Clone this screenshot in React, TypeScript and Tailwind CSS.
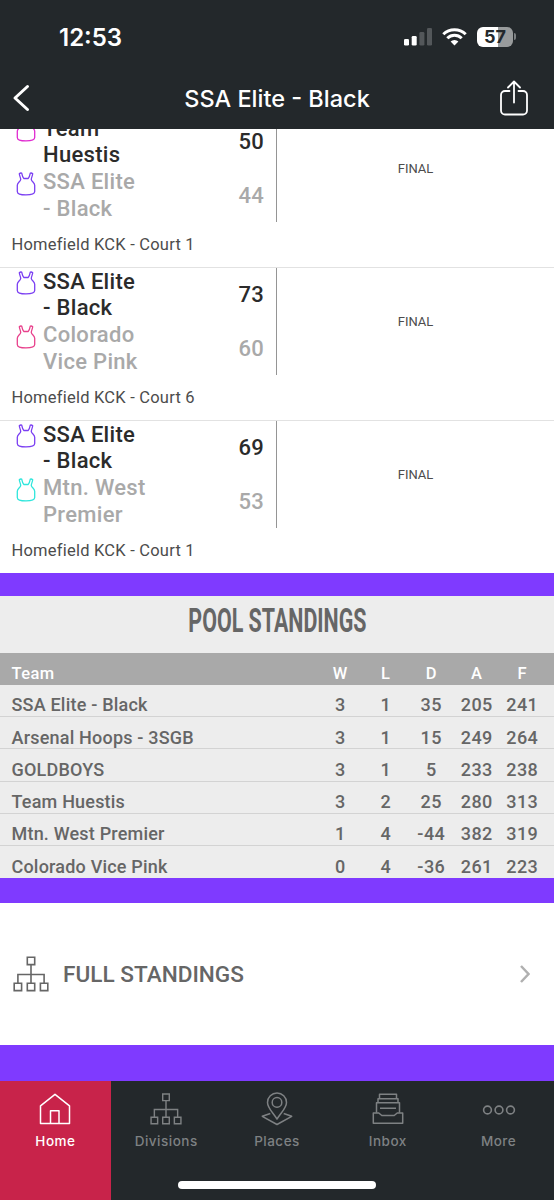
import type { ReactNode } from 'react';

type Side = { name: [string, string]; score: number; color: string };
type Game = { top: Side; bottom: Side; court: string };

const games: Game[] = [
  {
    top: { name: ['Team', 'Huestis'], score: 50, color: '#e02bd0' },
    bottom: { name: ['SSA Elite', '- Black'], score: 44, color: '#7b3ff2' },
    court: 'Homefield KCK - Court 1',
  },
  {
    top: { name: ['SSA Elite', '- Black'], score: 73, color: '#7b3ff2' },
    bottom: { name: ['Colorado', 'Vice Pink'], score: 60, color: '#e8418c' },
    court: 'Homefield KCK - Court 6',
  },
  {
    top: { name: ['SSA Elite', '- Black'], score: 69, color: '#7b3ff2' },
    bottom: { name: ['Mtn. West', 'Premier'], score: 53, color: '#2fe6dc' },
    court: 'Homefield KCK - Court 1',
  },
];

const standings = [
  { team: 'SSA Elite - Black', stats: [3, 1, 35, 205, 241] },
  { team: 'Arsenal Hoops - 3SGB', stats: [3, 1, 15, 249, 264] },
  { team: 'GOLDBOYS', stats: [3, 1, 5, 233, 238] },
  { team: 'Team Huestis', stats: [3, 2, 25, 280, 313] },
  { team: 'Mtn. West Premier', stats: [1, 4, -44, 382, 319] },
  { team: 'Colorado Vice Pink', stats: [0, 4, -36, 261, 223] },
];

const Jersey = ({ color }: { color: string }) => (
  <svg width="20" height="24" viewBox="0 0 20 24" fill="none" stroke={color} strokeWidth="1.3" strokeLinejoin="round">
    <path d="M3.300 1.700Q4.500.600 5.700 1.200C6.200 3.600 6.800 5.700 7.800 6.500H12.200C13.200 5.700 13.800 3.600 14.300 1.200Q15.500.600 16.700 1.700C16.500 4 15.300 5.500 15.300 7.600C15.800 9.800 18.700 10.700 18.700 13.200V19.500C18.700 21.800 16 22.900 10 22.900S1.300 21.800 1.300 19.500V13.200C1.300 10.700 4.200 9.800 4.700 7.600C4.700 5.500 3.500 4 3.300 1.700Z" />
  </svg>
);

const Tree = ({ size }: { size: number }) => (
  <svg width={size} height={size} viewBox="0 0 36 36" fill="none" stroke="currentColor" strokeWidth="1.6">
    <path d="M14.300 1.200h7.400v7.400h-7.400zM1.200 27.200h7.400v7.400H1.200zM14.300 27.200h7.400v7.400h-7.400zM27.400 27.200h7.400v7.400h-7.400zM18 8.600v18.600M4.900 27.200v-8.700h26.200v8.700" />
  </svg>
);

const HomeIcon = () => (
  <svg width="32" height="32" viewBox="0 0 32 32" fill="none" stroke="currentColor" strokeWidth="1.5" strokeLinejoin="round">
    <path d="M1.500 30.500V12.800L16 1.300l14.500 11.500v17.700zM11.500 30.500V17.700h8.500v12.800" />
  </svg>
);

const PlacesIcon = () => (
  <svg width="32" height="34" viewBox="0 0 32 34" fill="none" stroke="currentColor" strokeWidth="1.5" strokeLinejoin="round">
    <path d="M16 27C12 20.500 6.500 16 6.500 10.400a9.500 9.500 0 0 1 19 0C25.500 16 20 20.500 16 27Z" />
    <circle cx="16" cy="10.400" r="4.800" />
    <path d="M9.300 21.500 1.300 24.300 16 32.500l14.700-8.200-8-2.800" />
  </svg>
);

const InboxIcon = () => (
  <svg width="32" height="32" viewBox="0 0 32 32" fill="none" stroke="currentColor" strokeWidth="1.5" strokeLinejoin="round">
    <path d="M4.500 19.800V9.800h23v10M6 9.800V5.700h20v4.100M7.500 5.700V1.300h17v4.400M8 15.200h16" />
    <path d="M1.300 30.200V20h5.500l3 2.500h12.400l3-2.500h5.500v10.200z" />
  </svg>
);

const MoreIcon = () => (
  <svg width="34" height="32" viewBox="0 0 34 32" fill="none" stroke="currentColor" strokeWidth="1.6">
    <circle cx="5.500" cy="17" r="3.900" />
    <circle cx="17" cy="17" r="3.900" />
    <circle cx="28.500" cy="17" r="3.900" />
  </svg>
);

const StatusBar = () => (
  <div className="flex h-[68px] items-start justify-between pl-[59px] pr-[38px]">
    <span className="mt-[23px] font-['Inter'] text-[24px] font-semibold leading-[30px]">12:53</span>
    <div className="mt-[26px] flex h-[21px] items-center">
      <svg width="28" height="18" viewBox="0 0 28 18" fill="#fff">
        <rect x="0" y="11" width="5" height="6.500" rx="1.300" />
        <rect x="7.700" y="8" width="5" height="9.500" rx="1.300" />
        <rect x="15.400" y="4" width="5" height="13.500" rx="1.300" fill="#53575a" />
        <rect x="23" y="0" width="5" height="17.500" rx="1.300" fill="#53575a" />
      </svg>
      <svg className="ml-[10px]" width="25" height="18" viewBox="0 0 25 18" fill="none" stroke="#fff" strokeWidth="3">
        <path d="M1.300 6.200a16 16 0 0 1 22.400 0" />
        <path d="M5.300 10.300a10.300 10.300 0 0 1 14.400 0" />
        <path d="M8.600 13.600a5.600 5.600 0 0 1 7.800 0L12.500 17.500z" fill="#fff" stroke="none" />
      </svg>
      <div className="ml-[10px] flex h-5 w-9 items-center justify-center rounded-[6px] bg-linear-to-r from-white from-58% to-[#989b9c] to-58% font-['Inter'] text-[18px] font-bold leading-none text-[#23282b]">
        57
      </div>
      <span className="ml-px h-[7px] w-[2px] rounded-r-full bg-[#7c8082]" />
    </div>
  </div>
);

const Header = () => (
  <header className="h-[129px] shrink-0 bg-[#23282b] text-white">
    <StatusBar />
    <div className="flex h-[60px] items-center justify-between pl-[12px] pr-[26px]">
      <svg width="18" height="28" viewBox="0 0 18 28" fill="none" stroke="#fff" strokeWidth="3" strokeLinecap="round" strokeLinejoin="round">
        <path d="M15.500 2.500 3 14l12.500 11.500" />
      </svg>
      <h1 className="pl-[24px] pt-[2px] font-['Inter'] text-[23.500px] font-medium leading-[30px]">SSA Elite - Black</h1>
      <svg width="28" height="36" viewBox="0 0 28 36" fill="none" stroke="#fff" strokeWidth="1.800" strokeLinecap="round" strokeLinejoin="round">
        <path d="M9.500 11H5a4 4 0 0 0-4 4v15.500a4 4 0 0 0 4 4h18a4 4 0 0 0 4-4V15a4 4 0 0 0-4-4h-4.500M14 22.500V1.800M8 7.500l6-6 6 6" />
      </svg>
    </div>
  </header>
);

const TeamRow = ({ side, className }: { side: Side; className: string }) => (
  <div className={`flex h-[53.500px] items-center ${className}`}>
    <div className="w-[27px] self-start pt-[3px]">
      <Jersey color={side.color} />
    </div>
    <div className="flex-1 pt-px text-[22px] leading-[26.500px] tracking-[0.3px]">
      {side.name[0]}
      <br />
      {side.name[1]}
    </div>
    <span className="text-[22px] tracking-[0.3px]">{side.score}</span>
  </div>
);

const GameRow = ({ game }: { game: Game }) => (
  <div className="h-[153px] shrink-0 border-t border-[#e2e2e2]">
    <div className="flex h-[107px]">
      <div className="w-[277px] border-r border-[#959595] pl-4 pr-3 font-medium">
        <TeamRow side={game.top} className="text-[#2b2b2b]" />
        <TeamRow side={game.bottom} className="text-[#a9a9a9]" />
      </div>
      <div className="flex flex-1 items-center justify-center text-[13px] text-[#4c4c4c]">FINAL</div>
    </div>
    <p className="pl-[11.500px] pt-[11px] text-[16.500px] leading-6 tracking-[0.22px] text-[#4c4c4c]">{game.court}</p>
  </div>
);

const Stats = ({ values }: { values: (string | number)[] }) => (
  <div className="flex pr-[9px] text-center tracking-[0.4px]">
    {values.map((value, i) => (
      <span key={i} className="w-[45.500px]">
        {value}
      </span>
    ))}
  </div>
);

const Standings = () => (
  <section className="shrink-0 border-b-[25px] border-t-[23px] border-[#7f3aff] bg-[#ededed] font-medium text-[#666]">
    <h2 className="flex h-[57px] justify-center pt-[3px] text-[34px] font-bold leading-[42px]">
      <span className="scale-x-[0.630] whitespace-nowrap">POOL STANDINGS</span>
    </h2>
    <div className="flex h-[32px] items-end justify-between bg-[#a9a9a9] pb-[1px] pl-[11.500px] text-[16.500px] leading-5 tracking-[0.4px] text-white">
      <span>Team</span>
      <Stats values={['W', 'L', 'D', 'A', 'F']} />
    </div>
    {standings.map((row) => (
      <div
        key={row.team}
        className="flex h-[32.200px] items-end justify-between border-b border-[#d3d3d3] pl-[11.500px] text-[18px] leading-[20.800px] tracking-[0.2px] last:border-0"
      >
        <span>{row.team}</span>
        <Stats values={row.stats} />
      </div>
    ))}
  </section>
);

const Tab = ({ label, active, children }: { label: string; active?: boolean; children: ReactNode }) => (
  <div className={`flex flex-1 flex-col items-center pt-[11px] ${active ? 'bg-[#c8234a] text-white' : 'text-[#7e8183]'}`}>
    <div className="flex h-[34px] items-center">{children}</div>
    <span className="mt-[5px] font-['Inter'] text-[13.500px] font-medium leading-5 tracking-[0.5px]">{label}</span>
  </div>
);

const TabBar = () => (
  <nav className="relative flex h-[119px] shrink-0 bg-[#23282b]">
    <Tab label="Home" active><HomeIcon /></Tab>
    <Tab label="Divisions"><Tree size={32} /></Tab>
    <Tab label="Places"><PlacesIcon /></Tab>
    <Tab label="Inbox"><InboxIcon /></Tab>
    <Tab label="More"><MoreIcon /></Tab>
    <div className="absolute bottom-[11px] left-1/2 h-[8px] w-[198px] -translate-x-1/2 rounded-full bg-white" />
  </nav>
);

export default function App() {
  return (
    <div className="flex h-[1200px] w-[554px] flex-col overflow-hidden bg-white font-['Roboto',sans-serif]">
      <Header />
      <div className="flex h-[444px] shrink-0 flex-col justify-end overflow-hidden">
        {games.map((game, i) => (
          <GameRow key={i} game={game} />
        ))}
      </div>
      <Standings />
      <div className="flex flex-1 items-center bg-white pl-[13px] pr-[24px] text-[#666]">
        <Tree size={36} />
        <span className="ml-[14px] flex-1 pt-px text-[22.600px] font-medium">FULL STANDINGS</span>
        <svg width="10" height="18" viewBox="0 0 10 18" fill="none" stroke="#b0b0b0" strokeWidth="2.500">
          <path d="m1 1 7.500 8L1 17" />
        </svg>
      </div>
      <div className="h-[36px] shrink-0 bg-[#7f3aff]" />
      <TabBar />
    </div>
  );
}
